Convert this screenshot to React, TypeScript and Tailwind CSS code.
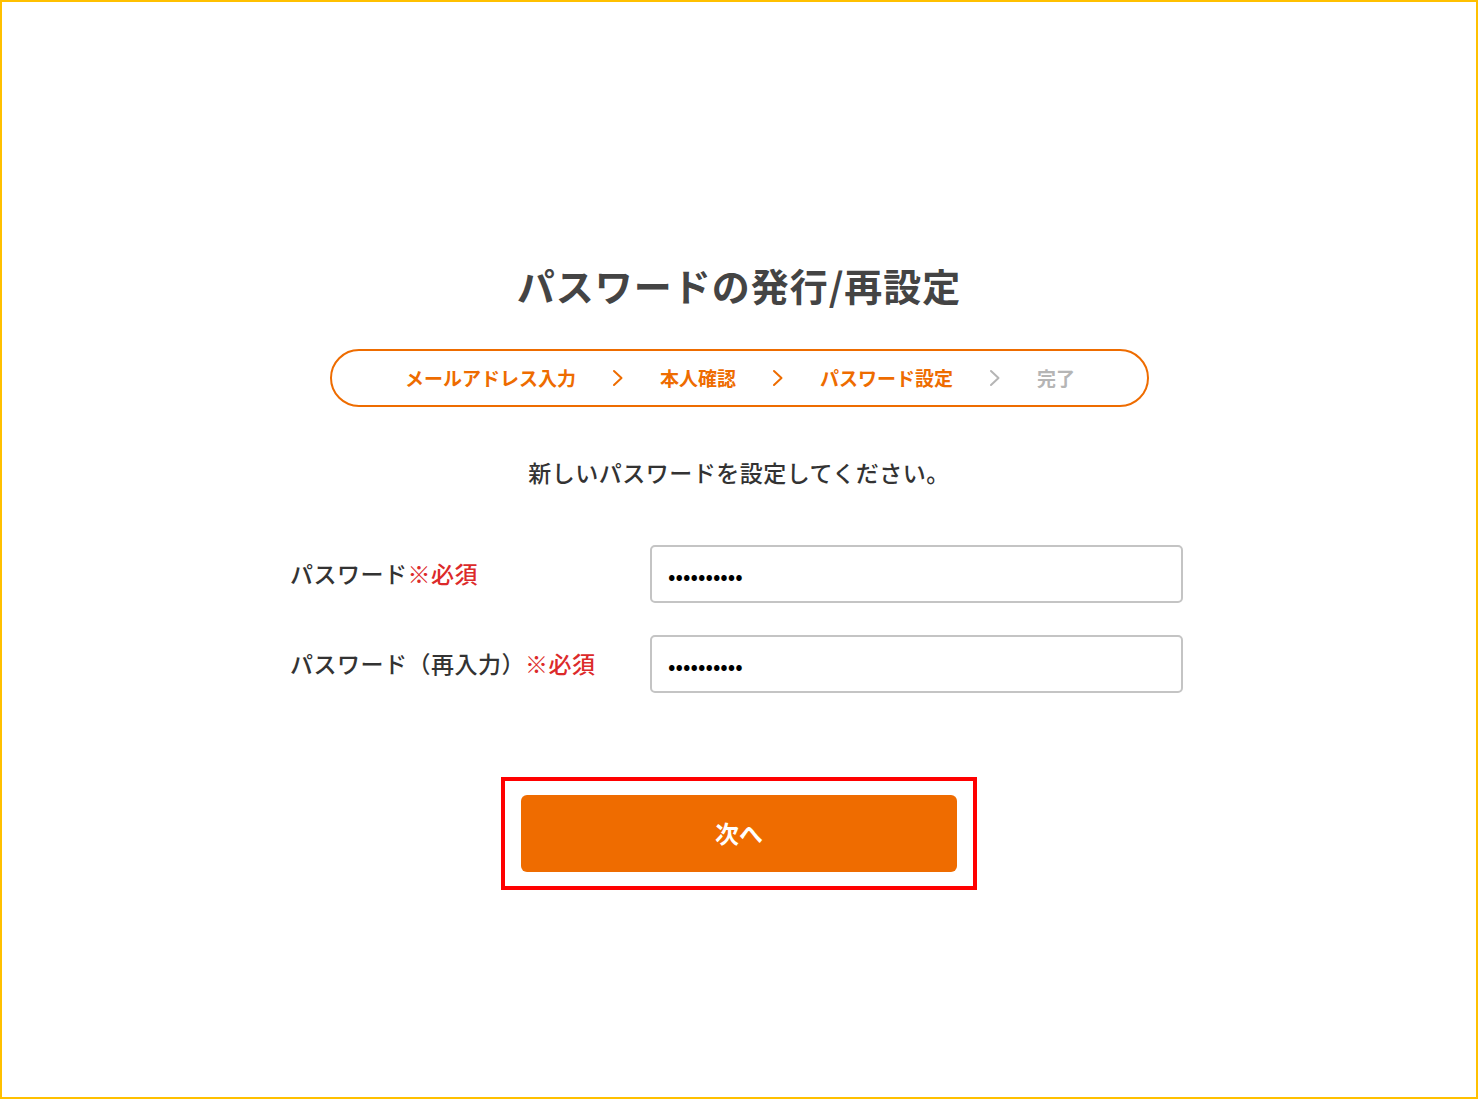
import React from "react";

const FONT = { fontFamily: '"Noto Sans CJK JP", "Noto Sans", sans-serif' };

function Chevron({ muted = false }: { muted?: boolean }) {
  return (
    <svg width="12" height="18" viewBox="0 0 12 18" fill="none" className="shrink-0">
      <polyline
        points="2,2 9.5,9 2,16"
        stroke={muted ? "#b5b5b5" : "#ee6c00"}
        strokeWidth="2"
        strokeLinecap="round"
        strokeLinejoin="round"
      />
    </svg>
  );
}

const STEPS = [
  { label: "メールアドレス入力", done: true },
  { label: "本人確認", done: true },
  { label: "パスワード設定", done: true },
  { label: "完了", done: false },
];

function Field({ label, value }: { label: string; value: string }) {
  return (
    <div className="flex items-center">
      <div className="w-[360px] text-[23px] font-medium tracking-[0.5px] text-[#333]">
        {label}
        <span className="text-[#dc2a2a]">※必須</span>
      </div>
      <input
        type="password"
        readOnly
        value={value}
        className="h-[58px] w-[533px] rounded-[5px] border-2 border-[#c4c4c4] bg-white px-4 text-[22px] text-black outline-none"
      />
    </div>
  );
}

export default function App() {
  return (
    <div
      style={FONT}
      className="flex h-[1099px] w-[1478px] flex-col items-center border-2 border-[#ffc000] bg-white"
    >
      <h1 className="mt-[264px] text-[38px] font-bold leading-none tracking-[1px] text-[#444]">
        パスワードの発行/再設定
      </h1>

      {/* Stepper */}
      <div className="mt-[45px] flex h-[58px] w-[819px] items-center justify-center gap-[36px] rounded-full border-2 border-[#ee6c00] pl-[2px]">
        {STEPS.map((s, i) => (
          <React.Fragment key={s.label}>
            {i > 0 && <Chevron muted={!s.done} />}
            <span
              className={`text-[19px] font-bold ${s.done ? "text-[#ee6c00]" : "text-[#b5b5b5]"}`}
            >
              {s.label}
            </span>
          </React.Fragment>
        ))}
      </div>

      <p className="mt-[48px] text-[23px] font-medium tracking-[0.5px] text-[#333]">
        新しいパスワードを設定してください。
      </p>

      {/* Form */}
      <div className="mt-[55px] flex w-[893px] flex-col gap-[32px] self-start ml-[288px]">
        <Field label="パスワード" value="ABCDEFGHIJ" />
        <Field label="パスワード（再入力）" value="ABCDEFGHIJ" />
      </div>

      <div className="mt-[84px] border-4 border-[#ff0000] px-[16px] py-[14px]">
        <button className="flex h-[77px] w-[436px] items-center justify-center rounded-[6px] bg-[#ef6c00] text-[24px] font-bold text-white">
          次へ
        </button>
      </div>
    </div>
  );
}
